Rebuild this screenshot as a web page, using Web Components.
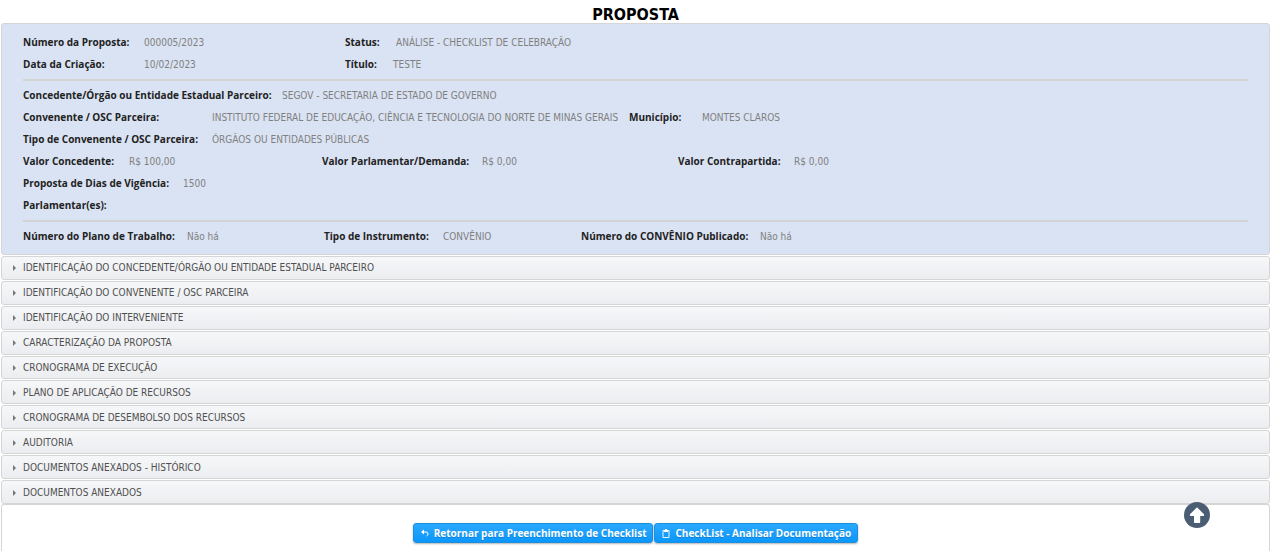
<!DOCTYPE html>
<html lang="pt-BR">
<head>
<meta charset="utf-8">
<title>Proposta</title>
<style>
body { margin: 0; font: 10px/22px "DejaVu Sans Condensed", "DejaVu Sans", sans-serif; background: #fff; color: #222; }
</style>
</head>
<body>
<proposal-page></proposal-page>
<script>
const define = (name, html, setup) => {
  const tpl = document.createElement('template');
  tpl.innerHTML = html;
  customElements.define(name, class extends HTMLElement {
    constructor() {
      super();
      this.attachShadow({ mode: 'open' }).append(tpl.content.cloneNode(true));
    }
    connectedCallback() { if (setup) setup(this, this.shadowRoot); }
  });
};

/* label + value; width and label-width are minimum widths in px */
define('data-field', `
<style>
:host { display: flex; flex: none; align-items: baseline; white-space: nowrap; }
b { flex: none; color: #222; font-family: var(--bold-font); }
span { color: #808080; }
</style>
<b></b><span><slot></slot></span>`, (el, root) => {
  const b = root.querySelector('b');
  b.textContent = el.getAttribute('label') + ':';
  b.style.minWidth = (el.getAttribute('label-width') || 0) + 'px';
  el.style.minWidth = (el.getAttribute('width') || 0) + 'px';
});

define('data-row', `
<style>:host { display: flex; align-items: baseline; height: 22px; }</style><slot></slot>`);

define('data-panel', `
<style>
:host { display: block; padding: 7px 21px; background: #dae3f3; border: 1px solid #d5d5d5; border-radius: 3px; }
::slotted(hr) { height: 2px; margin: 4px 0 3px; border: 0; background: #d3d3d3; }
</style><slot></slot>`);

define('accordion-item', `
<style>
:host { display: flex; }
button { flex: 1; display: flex; align-items: center; gap: 7px; padding: 1px 0 0 11px; margin: 0; font: inherit; line-height: 12px;
  color: #4f4f4f; text-align: left; border: 1px solid #d5d5d5; border-radius: 3px; cursor: pointer;
  background: linear-gradient(#f6f7f9, #ebedf0); }
svg { display: block; flex: none; }
</style>
<button type="button" aria-expanded="false">
<svg width="3" height="6" viewBox="0 0 3 6" aria-hidden="true"><path d="M0 0L3 3L0 6Z" fill="#777"/></svg>
<slot></slot></button>`);

define('accordion-list', `
<style>:host { display: grid; grid-auto-rows: 1fr; row-gap: 1px; min-height: 248px; }</style><slot></slot>`);

define('action-button', `
<style>
:host { display: block; }
button { display: flex; align-items: center; height: 20px; gap: 5px; padding: 0 6px 0 7px; margin: 0; color: #fff;
  font: bold 10px/18px var(--bold-font); border: 1px solid #1a8fe0; border-radius: 3px; cursor: pointer;
  background: linear-gradient(#2ba8ff, #0a97fb); box-shadow: 0 1px 2px rgba(0,0,0,.3); text-shadow: 0 1px 0 rgba(0,0,0,.2); }
::slotted(svg) { display: block; flex: none; }
</style>
<button type="button"><slot name="icon"></slot><slot></slot></button>`);

define('back-to-top', `
<style>
:host { position: fixed; right: 70px; bottom: 23px; }
button { display: block; padding: 0; border: 0; background: none; cursor: pointer; }
svg { display: block; }
</style>
<button type="button" aria-label="Voltar ao topo"><svg width="26" height="26" viewBox="0 0 26 26">
<circle cx="13" cy="13" r="13" fill="#4b5d73"/>
<path d="M13 5.2L20 12.2Q20.8 13.6 19.2 14H16.2V20.2Q16.2 21 15.4 21H10.8Q10 21 10 20.2V14H6.8Q5.2 13.6 6 12.2Z" fill="#fff"/></svg></button>`);

define('proposal-page', `
<style>
:host { --bold-font: "Open Sans", "DejaVu Sans", sans-serif;
  display: flex; flex-direction: column; box-sizing: border-box; min-height: 100vh; padding: 6px 10px 0 1px; }
h1 { margin: 0; font-size: 16px; line-height: 17px; color: #000; text-align: center; }
accordion-list { margin-top: 1px; }
footer { flex: 1; display: flex; justify-content: center; align-items: flex-start; gap: 1px; padding: 18px 0 8px;
  border: solid #d5d5d5; border-width: 1px 1px 0; border-radius: 3px 3px 0 0; }
</style>
<h1>PROPOSTA</h1>
<data-panel>
<data-row><data-field label="Número da Proposta" width="322" label-width="121">000005/2023</data-field><data-field label="Status" label-width="51">ANÁLISE - CHECKLIST DE CELEBRAÇÃO</data-field></data-row>
<data-row><data-field label="Data da Criação" width="322" label-width="121">10/02/2023</data-field><data-field label="Título" label-width="48">TESTE</data-field></data-row>
<hr>
<data-row><data-field label="Concedente/Órgão ou Entidade Estadual Parceiro" label-width="259">SEGOV - SECRETARIA DE ESTADO DE GOVERNO</data-field></data-row>
<data-row><data-field label="Convenente / OSC Parceira" width="606" label-width="189">INSTITUTO FEDERAL DE EDUCAÇÃO, CIÊNCIA E TECNOLOGIA DO NORTE DE MINAS GERAIS</data-field><data-field label="Município" label-width="73">MONTES CLAROS</data-field></data-row>
<data-row><data-field label="Tipo de Convenente / OSC Parceira" label-width="189">ÓRGÃOS OU ENTIDADES PÚBLICAS</data-field></data-row>
<data-row><data-field label="Valor Concedente" width="299" label-width="106">R$ 100,00</data-field><data-field label="Valor Parlamentar/Demanda" width="356" label-width="160">R$ 0,00</data-field><data-field label="Valor Contrapartida" label-width="116">R$ 0,00</data-field></data-row>
<data-row><data-field label="Proposta de Dias de Vigência" label-width="160">1500</data-field></data-row>
<data-row><data-field label="Parlamentar(es)"></data-field></data-row>
<hr>
<data-row><data-field label="Número do Plano de Trabalho" width="301" label-width="164">Não há</data-field><data-field label="Tipo de Instrumento" width="257" label-width="119">CONVÊNIO</data-field><data-field label="Número do CONVÊNIO Publicado" label-width="179">Não há</data-field></data-row>
</data-panel>
<accordion-list>
<accordion-item>IDENTIFICAÇÃO DO CONCEDENTE/ÓRGÃO OU ENTIDADE ESTADUAL PARCEIRO</accordion-item>
<accordion-item>IDENTIFICAÇÃO DO CONVENENTE / OSC PARCEIRA</accordion-item>
<accordion-item>IDENTIFICAÇÃO DO INTERVENIENTE</accordion-item>
<accordion-item>CARACTERIZAÇÃO DA PROPOSTA</accordion-item>
<accordion-item>CRONOGRAMA DE EXECUÇÃO</accordion-item>
<accordion-item>PLANO DE APLICAÇÃO DE RECURSOS</accordion-item>
<accordion-item>CRONOGRAMA DE DESEMBOLSO DOS RECURSOS</accordion-item>
<accordion-item>AUDITORIA</accordion-item>
<accordion-item>DOCUMENTOS ANEXADOS - HISTÓRICO</accordion-item>
<accordion-item>DOCUMENTOS ANEXADOS</accordion-item>
</accordion-list>
<footer>
<action-button><svg slot="icon" width="8" height="8" viewBox="0 0 8 8" aria-hidden="true"><path d="M0 3L3 0.5V5.5Z" fill="#fff"/><path d="M2 3H5Q7 3 7 5Q7 6.3 5.5 7" fill="none" stroke="#fff"/></svg>Retornar para Preenchimento de Checklist</action-button>
<action-button><svg slot="icon" width="8" height="9" viewBox="0 0 8 9" aria-hidden="true"><path d="M1 1.5H7V8.5H1Z" fill="none" stroke="#fff" stroke-opacity=".9"/><path d="M3 0H5V1H6V3H2V1H3Z" fill="#fff"/></svg>CheckList - Analisar Documentação</action-button>
</footer>
<back-to-top></back-to-top>`);
</script>
</body>
</html>
